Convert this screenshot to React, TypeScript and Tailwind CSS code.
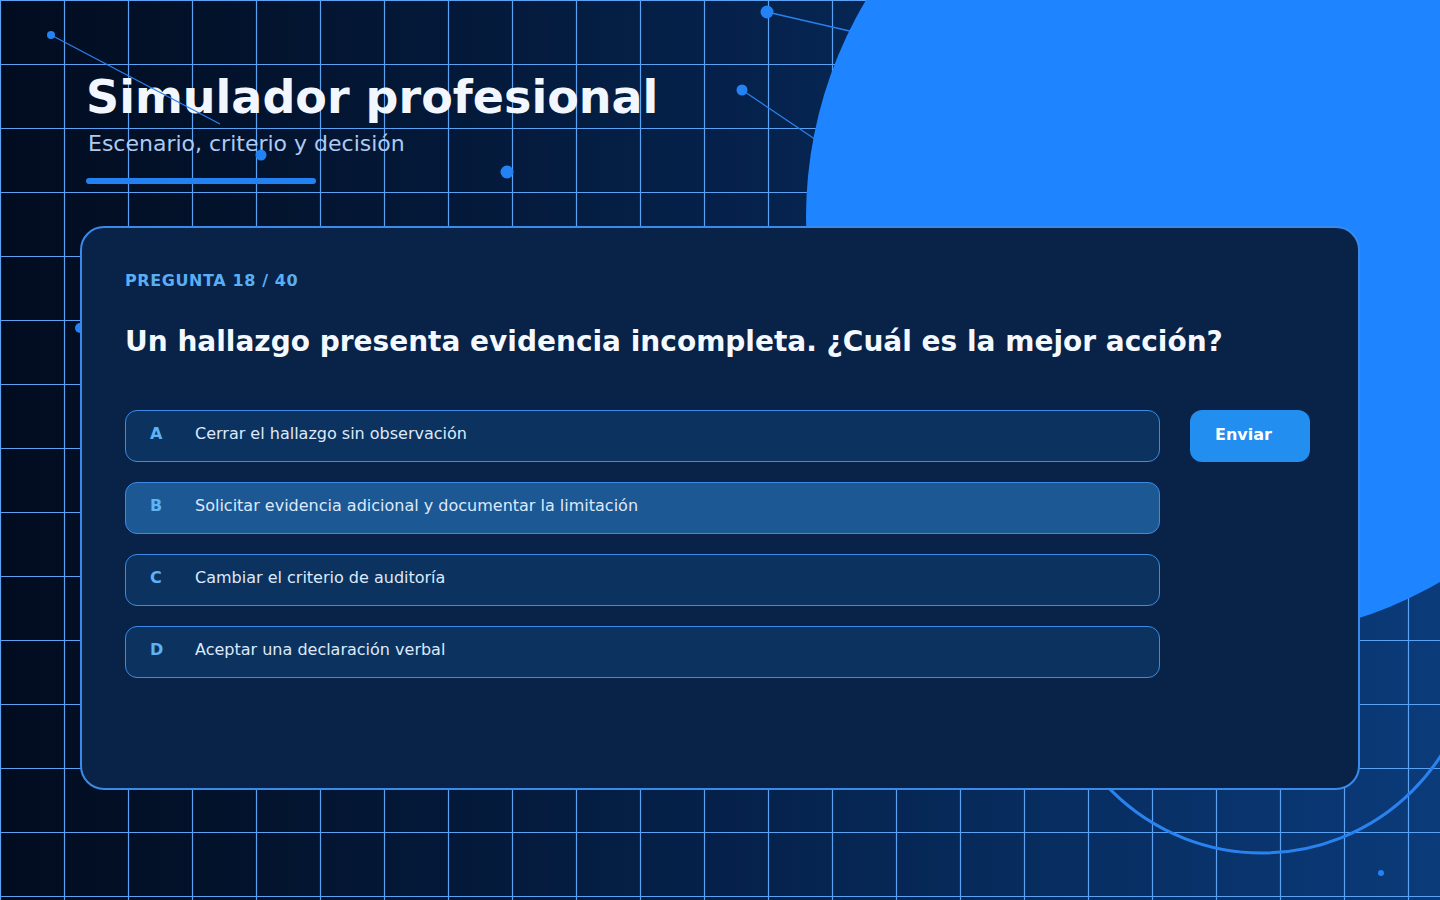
const options = [
  { key: 'A', label: 'Cerrar el hallazgo sin observación', selected: false },
  { key: 'B', label: 'Solicitar evidencia adicional y documentar la limitación', selected: true },
  { key: 'C', label: 'Cambiar el criterio de auditoría', selected: false },
  { key: 'D', label: 'Aceptar una declaración verbal', selected: false },
];

const cols = Array.from({ length: 23 }, (_, i) => i * 64);
const rows = Array.from({ length: 15 }, (_, i) => i * 64);

function GridLayer() {
  return (
    <svg className="absolute inset-0 z-0" width="1440" height="900" viewBox="0 0 1440 900">
      {cols.map((x) => (
        <line key={'v' + x} x1={x + 0.5} y1="0" x2={x + 0.5} y2="900" stroke="#5ca2f2" strokeWidth="1.2" />
      ))}
      {rows.map((y) => (
        <line key={'h' + y} x1="0" y1={y + 0.5} x2="1440" y2={y + 0.5} stroke="#5ca2f2" strokeWidth="1.2" />
      ))}
    </svg>
  );
}

function DecoLayer() {
  return (
    <svg className="pointer-events-none absolute inset-0 z-[2]" width="1440" height="900" viewBox="0 0 1440 900">
      {/* network lines */}
      <line x1="51" y1="35" x2="220" y2="124" stroke="#2a80ec" strokeWidth="1.3" />
      <line x1="767" y1="12" x2="880" y2="38" stroke="#2a80ec" strokeWidth="1.3" />
      <line x1="742" y1="90" x2="840" y2="156" stroke="#2a80ec" strokeWidth="1.3" />
      <circle cx="51" cy="35" r="4" fill="#2382f4" />
      <circle cx="261" cy="155" r="5.5" fill="#2382f4" />
      <circle cx="507" cy="172" r="6.5" fill="#2382f4" />
      <circle cx="767" cy="12" r="6.5" fill="#2382f4" />
      <circle cx="742" cy="90" r="5.5" fill="#2382f4" />
      <circle cx="80" cy="328" r="5" fill="#2382f4" />
      <circle cx="1381" cy="873" r="3" fill="#2382f4" />
      {/* ring sits under the big disc */}
      <circle cx="1262" cy="640" r="213" fill="none" stroke="#2a82f0" strokeWidth="3" />
      <circle cx="1228" cy="217" r="422" fill="#1f84ff" />
    </svg>
  );
}

export default function App() {
  return (
    <div className="relative isolate h-[900px] w-[1440px] overflow-hidden bg-linear-to-r from-[#020c1f] via-[#05214a] to-[#0b3b7a] [font-family:'DejaVu_Sans',sans-serif]">
      <GridLayer />
      <DecoLayer />

      <div className="flex flex-col pl-[80px] pt-[74px]">
        {/* Header */}
        <header className="relative z-[1] pl-[6px]">
          <h1 className="text-[46px] font-bold leading-none text-[#f2f7ff]">Simulador profesional</h1>
          <p className="mt-[13px] pl-[2px] text-[22px] leading-none text-[#abcbf2]">Escenario, criterio y decisión</p>
          <div className="mt-[23px] h-[6px] w-[230px] rounded-full bg-[#2382f2]" />
        </header>

        {/* Question card */}
        <section className="relative z-[3] mt-[42px] h-[564px] w-[1280px] rounded-[24px] border-2 border-[#3a8aea] bg-[#092247] pl-[43px] pr-[48px] pt-[45px]">
          <div className="text-[16px] font-bold leading-none tracking-[0.6px] text-[#5aaef4]">PREGUNTA 18 / 40</div>
          <h2 className="mt-[39px] text-[28px] font-bold leading-none text-[#f4f8ff]">
            Un hallazgo presenta evidencia incompleta. ¿Cuál es la mejor acción?
          </h2>

          <div className="mt-[54px] flex items-start gap-[30px]">
            <div className="flex w-[1035px] flex-col gap-[20px]">
              {options.map((opt) => (
                <div
                  key={opt.key}
                  className={
                    opt.selected
                      ? 'flex h-[52px] items-start rounded-[12px] border border-[#3d8ae6] bg-[#1b5894] pl-[24px] pt-[11px] text-[16px] leading-[24px]'
                      : 'flex h-[52px] items-start rounded-[12px] border border-[#3d8ae6] bg-[#0c335f] pl-[24px] pt-[11px] text-[16px] leading-[24px]'
                  }
                >
                  <span className="w-[45px] font-bold text-[#5db3f7]">{opt.key}</span>
                  <span className="text-[#dde9fb]">{opt.label}</span>
                </div>
              ))}
            </div>
            <button className="h-[52px] w-[120px] rounded-[12px] bg-[#218ef0] pb-[3px] pl-[25px] text-left text-[16px] font-bold leading-[24px] text-white">
              Enviar
            </button>
          </div>
        </section>
      </div>
    </div>
  );
}
